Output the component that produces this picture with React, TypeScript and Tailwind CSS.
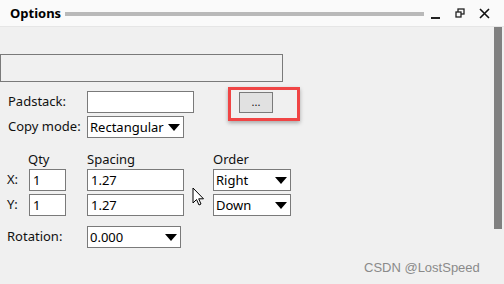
import React from "react";

const Arrow = () => (
  <svg width="12" height="7" viewBox="0 0 12 7" className="shrink-0">
    <path d="M0 0 L12 0 L6 7 Z" fill="#000" />
  </svg>
);

const Select = ({ value, w }: { value: string; w: string }) => (
  <div className={`${w} h-[22px] bg-white border border-[#7a7a7a] flex items-center justify-between pl-[2px] pr-[3px]`}>
    <span className="text-[13px] leading-none text-black">{value}</span>
    <Arrow />
  </div>
);

const Input = ({ value, w }: { value?: string; w: string }) => (
  <div className={`${w} h-[22px] bg-white border border-[#7a7a7a] flex items-center pl-[3px]`}>
    <span className="text-[13px] leading-none text-black">{value}</span>
  </div>
);

export default function App() {
  return (
    <div
      className="w-[504px] h-[284px] bg-[#f0f0f0] relative overflow-hidden text-[#111]"
      style={{ fontFamily: '"Noto Sans", "Open Sans", sans-serif' }}
    >
      {/* title bar */}
      <div className="h-[27px] flex items-center bg-[#fafafa] border-b border-[#e6e6e6]">
        <span className="ml-[10px] text-[13px] font-bold text-black leading-none">Options</span>
        <div className="ml-[4px] w-[359px] h-[4px] bg-[#b9b9b9] mt-[2px]" />
        <div className="ml-[7px] w-[9px] h-[2px] bg-[#222] mt-[10px]" />
        <svg width="10" height="10" viewBox="0 0 10 10" className="ml-[15px]">
          <rect x="3" y="1" width="6" height="5" fill="none" stroke="#222" strokeWidth="1.3" />
          <rect x="1" y="4" width="5" height="5" fill="#fafafa" stroke="#222" strokeWidth="1.3" />
        </svg>
        <svg width="11" height="11" viewBox="0 0 11 11" className="ml-[14px]">
          <path d="M1 1 L10 10 M10 1 L1 10" stroke="#111" strokeWidth="1.6" />
        </svg>
      </div>

      <div className="flex">
        {/* content */}
        <div className="flex-1 flex flex-col">
          <div className="mt-[27px] w-[283px] h-[28px] border border-[#7a7a7a]" />

          <div className="mt-[9px] flex items-center">
            <span className="ml-[8px] w-[79px] text-[13px]">Padstack:</span>
            <Input w="w-[107px]" />
            <div className="ml-[45px] w-[34px] h-[21px] bg-[#e1e1e1] border border-[#7a7a7a] flex items-center justify-center text-[11px] leading-none pb-[2px]">
              ...
            </div>
          </div>

          <div className="mt-[3px] flex items-center">
            <span className="ml-[8px] w-[79px] text-[13px]">Copy mode:</span>
            <Select value="Rectangular" w="w-[97px]" />
          </div>

          <div className="mt-[11px] flex items-end h-[17px] text-[13px] leading-none">
            <span className="ml-[28px] w-[59px]">Qty</span>
            <span className="w-[126px]">Spacing</span>
            <span>Order</span>
          </div>

          <div className="mt-[3px] flex items-center">
            <span className="ml-[7px] w-[22px] text-[13px]">X:</span>
            <Input value="1" w="w-[37px]" />
            <div className="ml-[21px]">
              <Input value="1.27" w="w-[97px]" />
            </div>
            <div className="ml-[29px]">
              <Select value="Right" w="w-[78px]" />
            </div>
          </div>

          <div className="mt-[3px] flex items-center">
            <span className="ml-[7px] w-[22px] text-[13px]">Y:</span>
            <Input value="1" w="w-[37px]" />
            <div className="ml-[21px]">
              <Input value="1.27" w="w-[97px]" />
            </div>
            <div className="ml-[29px]">
              <Select value="Down" w="w-[78px]" />
            </div>
          </div>

          <div className="mt-[10px] flex items-center">
            <span className="ml-[7px] w-[80px] text-[13px]">Rotation:</span>
            <Select value="0.000" w="w-[94px]" />
          </div>
        </div>

        {/* scrollbar */}
        <div className="w-[8px] h-[202px] bg-[#808080] mr-[2px]" />
      </div>

      {/* red annotation box */}
      <div className="absolute left-[228px] top-[87px] w-[72px] h-[34px] border-[3px] border-[#f04545] shadow-[0_2px_4px_rgba(0,0,0,0.3)]" />

      {/* mouse cursor */}
      <svg width="13" height="20" viewBox="0 0 13 20" className="absolute left-[192px] top-[187px]">
        <path d="M1 1 L1 16 L4.5 12.5 L7 18 L9 17 L6.7 11.8 L11.5 11.8 Z" fill="#fff" stroke="#000" strokeWidth="1" strokeLinejoin="round" />
      </svg>

      {/* watermark */}
      <span
        className="absolute left-[364px] top-[258px] text-[13px] text-[#8a8a8a]"
        style={{ fontFamily: '"Liberation Sans", sans-serif' }}
      >
        CSDN @LostSpeed
      </span>
    </div>
  );
}
